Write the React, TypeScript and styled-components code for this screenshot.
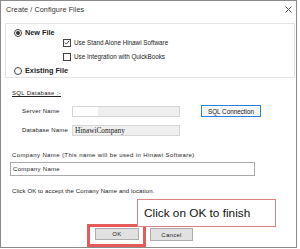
import React from "react";
import styled, { createGlobalStyle } from "styled-components";

const FONT = "'Liberation Sans', Arial, sans-serif";

const Global = createGlobalStyle`
  html, body {
    margin: 0;
    padding: 0;
    background: #ffffff;
  }
  * {
    box-sizing: border-box;
  }
`;

function App() {
  return (
    <>
      <Global />
      <Window>
        <TitleBar>
          <Title>Create / Configure Files</Title>
          <Close>
            <svg width="7" height="7" viewBox="0 0 7 7">
              <path d="M0.5 0.5 L6.5 6.5 M6.5 0.5 L0.5 6.5" stroke="#555" strokeWidth="1" />
            </svg>
          </Close>
        </TitleBar>

        <GroupBox>
          <RadioRow>
            <Radio checked />
            <RadioLabel>New File</RadioLabel>
          </RadioRow>
          <CheckRow $top={-3}>
            <CheckBox>
              <svg width="7" height="7" viewBox="0 0 7 7">
                <path d="M1 3.6 L2.8 5.4 L6 1.4" stroke="#333" strokeWidth="1" fill="none" />
              </svg>
            </CheckBox>
            <CheckText>Use Stand Alone Hinawi Software</CheckText>
          </CheckRow>
          <CheckRow $top={0}>
            <CheckBox />
            <CheckText>Use Integration with QuickBooks</CheckText>
          </CheckRow>
          <RadioRow $gap={1}>
            <Radio />
            <RadioLabel>Existing File</RadioLabel>
          </RadioRow>
        </GroupBox>

        <Content>
          <SectionLabel>SQL Database :-</SectionLabel>
          <FieldRow $top={6}>
            <FieldLabel>Server Name</FieldLabel>
            <Field>
              <FieldBlank />
            </Field>
            <SqlButton>SQL Connection</SqlButton>
          </FieldRow>
          <FieldRow $top={7}>
            <FieldLabel>Database Name</FieldLabel>
            <Field>
              <SerifValue>HinawiCompany</SerifValue>
            </Field>
          </FieldRow>
          <Line $top={13} $ls={0.38}>
            Company Name (This name will be used in Hinawi Software)
          </Line>
          <CompanyInput>Company Name</CompanyInput>
          <Line $top={9} $ls={0.12}>
            Click OK to accept the Comany Name and location.
          </Line>
          <ButtonRow>
            <Highlight>
              <DialogButton>OK</DialogButton>
            </Highlight>
            <DialogButton>Cancel</DialogButton>
          </ButtonRow>
        </Content>

        <Callout>Click on OK to finish</Callout>
      </Window>
    </>
  );
}

const Window = styled.div`
  position: relative;
  width: 297px;
  height: 248px;
  border: 1px solid #8c8c8c;
  background: #ffffff;
  font-family: ${FONT};
  color: #1a1a1a;
  display: flex;
  flex-direction: column;
`;

const TitleBar = styled.div`
  height: 22px;
  padding: 0 3px 4px 5px;
  display: flex;
  align-items: center;
  justify-content: space-between;
`;

const Title = styled.div`
  font-size: 7.2px;
  letter-spacing: 0.1px;
  color: #333;
`;

const Close = styled.div`
  width: 10px;
  height: 10px;
  display: flex;
  align-items: center;
  justify-content: center;
`;

const GroupBox = styled.div`
  margin: 0 1px 0 4px;
  height: 57px;
  border: 1px solid #e4e4e4;
  display: flex;
  flex-direction: column;
`;

const RadioRow = styled.div<{ $gap?: number }>`
  display: flex;
  align-items: center;
  height: 12px;
  margin-top: ${(p) => (p.$gap !== undefined ? p.$gap : 3)}px;
  padding-left: 8px;
  gap: 3px;
`;

const Radio = styled.span<{ checked?: boolean }>`
  width: 8px;
  height: 8px;
  border-radius: 50%;
  border: 1px solid #444;
  background: #fff;
  display: flex;
  align-items: center;
  justify-content: center;
  &::after {
    content: "";
    width: 4px;
    height: 4px;
    border-radius: 50%;
    background: ${(p) => (p.checked ? "#333" : "transparent")};
  }
`;

const RadioLabel = styled.span`
  font-size: 7.3px;
  font-weight: bold;
  color: #222;
`;

const CheckRow = styled.div<{ $top: number }>`
  display: flex;
  align-items: center;
  height: 14px;
  margin-top: ${(p) => p.$top}px;
  padding-left: 57px;
  gap: 3px;
`;

const CheckBox = styled.span`
  width: 8px;
  height: 8px;
  border: 1px solid #444;
  background: #fff;
  display: flex;
  align-items: center;
  justify-content: center;
`;

const CheckText = styled.span`
  font-size: 6.3px;
  color: #222;
`;

const Content = styled.div`
  display: flex;
  flex-direction: column;
  padding-left: 9px;
`;

const SectionLabel = styled.div`
  margin: 9px 0 0 2px;
  height: 12px;
  line-height: 12px;
  font-size: 6px;
  letter-spacing: 0.3px;
  text-decoration: underline;
  color: #222;
`;

const FieldRow = styled.div<{ $top: number }>`
  display: flex;
  align-items: center;
  height: 12px;
  margin-top: ${(p) => p.$top}px;
  padding-left: 12px;
`;

const FieldLabel = styled.div`
  width: 50px;
  font-size: 6px;
  letter-spacing: 0.2px;
  color: #222;
`;

const Field = styled.div`
  width: 108px;
  height: 11px;
  background: #efefef;
  border: 1px solid #d6d6d6;
  display: flex;
  align-items: center;
`;

const FieldBlank = styled.div`
  width: 25px;
  height: 9px;
  background: #ffffff;
`;

const SerifValue = styled.span`
  font-family: "Liberation Serif", "Times New Roman", serif;
  font-size: 7.3px;
  padding-left: 2px;
  color: #222;
`;

const SqlButton = styled.div`
  margin-left: 21px;
  width: 60px;
  height: 12px;
  border: 1px solid #2b7fd6;
  box-shadow: inset 0 0 0 1px #ffffff;
  background: #f6f6f6;
  display: flex;
  align-items: center;
  justify-content: center;
  font-size: 6.3px;
  color: #222;
`;

const Line = styled.div<{ $top: number; $ls: number }>`
  margin: ${(p) => p.$top}px 0 0 2px;
  height: 12px;
  line-height: 12px;
  font-size: 6px;
  letter-spacing: ${(p) => p.$ls}px;
  color: #222;
`;

const CompanyInput = styled.div`
  margin-top: 1px;
  width: 245px;
  height: 14px;
  border: 1px solid #aaaaaa;
  padding-left: 2px;
  display: flex;
  align-items: center;
  font-size: 6px;
  letter-spacing: 0.3px;
  color: #222;
`;

const ButtonRow = styled.div`
  margin: 27px 0 0 77px;
  display: flex;
  align-items: flex-start;
  gap: 4px;
`;

const Highlight = styled.div`
  border: 3px solid #e55b5b;
  padding: 1px 4px 4px 5px;
`;

const DialogButton = styled.div`
  margin-top: 4px;
  width: 43px;
  height: 13px;
  border: 1px solid #adadad;
  background: #e1e1e1;
  display: flex;
  align-items: center;
  justify-content: center;
  font-size: 6px;
  letter-spacing: 0.3px;
  color: #222;
  ${Highlight} & {
    margin-top: 0;
    width: 44px;
    height: 12px;
  }
`;

const Callout = styled.div`
  position: absolute;
  left: 136px;
  top: 198px;
  width: 139px;
  height: 28px;
  border: 1px solid #df8383;
  background: #ffffff;
  display: flex;
  align-items: center;
  padding-left: 6px;
  font-family: ${FONT};
  font-size: 11.8px;
  color: #111;
`;

export default App;
